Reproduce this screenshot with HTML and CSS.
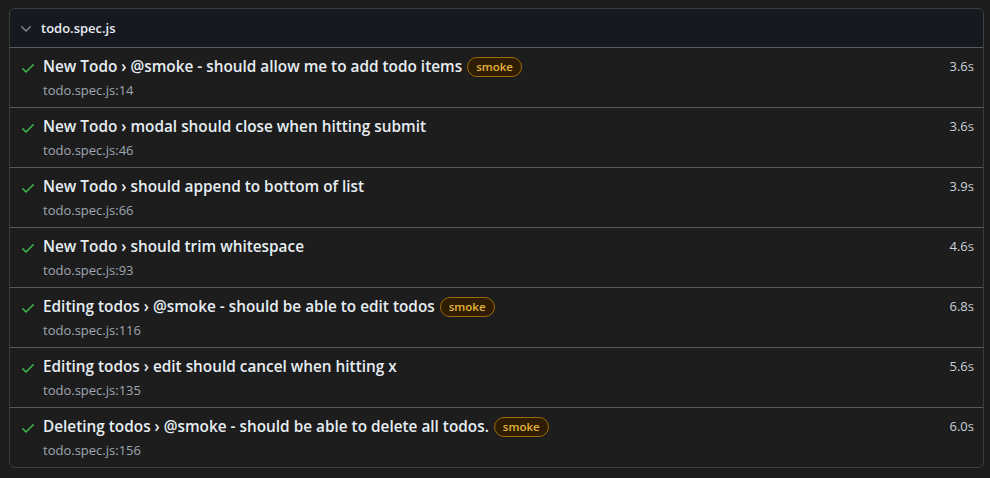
FILE: index.html
```html
<!DOCTYPE html>
<html lang="en">
<head>
<meta charset="utf-8">
<title>todo.spec.js</title>
<link rel="stylesheet" href="styles.css">
</head>
<body>
<div class="file">
  <div class="file-header">
    <svg class="chevron" viewBox="0 0 16 16" width="16" height="16"><path d="M12.78 5.22a.749.749 0 0 1 0 1.06l-4.25 4.25a.749.749 0 0 1-1.06 0L3.22 6.280a.749.749 0 1 1 1.06-1.06L8 8.939l3.72-3.719a.749.749 0 0 1 1.060 0Z"/></svg>
    <span class="file-name">todo.spec.js</span>
  </div>

  <div class="test">
    <svg class="check" viewBox="0 0 16 16" width="16" height="16"><path d="M13.78 4.22a.75.75 0 0 1 0 1.06l-7.25 7.25a.75.75 0 0 1-1.06 0L2.22 9.28a.751.751 0 0 1 .018-1.042.751.751 0 0 1 1.042-.018L6 10.94l6.72-6.72a.75.75 0 0 1 1.06 0Z"/></svg>
    <div class="test-main">
      <div class="title">New Todo › @smoke - should allow me to add todo items <span class="label">smoke</span></div>
      <div class="location">todo.spec.js:14</div>
    </div>
    <div class="duration">3.6s</div>
  </div>

  <div class="test">
    <svg class="check" viewBox="0 0 16 16" width="16" height="16"><path d="M13.78 4.22a.75.75 0 0 1 0 1.06l-7.25 7.25a.75.75 0 0 1-1.06 0L2.22 9.28a.751.751 0 0 1 .018-1.042.751.751 0 0 1 1.042-.018L6 10.94l6.72-6.72a.75.75 0 0 1 1.06 0Z"/></svg>
    <div class="test-main">
      <div class="title">New Todo › modal should close when hitting submit</div>
      <div class="location">todo.spec.js:46</div>
    </div>
    <div class="duration">3.6s</div>
  </div>

  <div class="test">
    <svg class="check" viewBox="0 0 16 16" width="16" height="16"><path d="M13.78 4.22a.75.75 0 0 1 0 1.06l-7.25 7.25a.75.75 0 0 1-1.06 0L2.22 9.28a.751.751 0 0 1 .018-1.042.751.751 0 0 1 1.042-.018L6 10.94l6.72-6.72a.75.75 0 0 1 1.06 0Z"/></svg>
    <div class="test-main">
      <div class="title">New Todo › should append to bottom of list</div>
      <div class="location">todo.spec.js:66</div>
    </div>
    <div class="duration">3.9s</div>
  </div>

  <div class="test">
    <svg class="check" viewBox="0 0 16 16" width="16" height="16"><path d="M13.78 4.22a.75.75 0 0 1 0 1.06l-7.25 7.25a.75.75 0 0 1-1.06 0L2.22 9.28a.751.751 0 0 1 .018-1.042.751.751 0 0 1 1.042-.018L6 10.94l6.72-6.72a.75.75 0 0 1 1.06 0Z"/></svg>
    <div class="test-main">
      <div class="title">New Todo › should trim whitespace</div>
      <div class="location">todo.spec.js:93</div>
    </div>
    <div class="duration">4.6s</div>
  </div>

  <div class="test">
    <svg class="check" viewBox="0 0 16 16" width="16" height="16"><path d="M13.78 4.22a.75.75 0 0 1 0 1.06l-7.25 7.25a.75.75 0 0 1-1.06 0L2.22 9.28a.751.751 0 0 1 .018-1.042.751.751 0 0 1 1.042-.018L6 10.94l6.72-6.72a.75.75 0 0 1 1.06 0Z"/></svg>
    <div class="test-main">
      <div class="title">Editing todos › @smoke - should be able to edit todos <span class="label">smoke</span></div>
      <div class="location">todo.spec.js:116</div>
    </div>
    <div class="duration">6.8s</div>
  </div>

  <div class="test">
    <svg class="check" viewBox="0 0 16 16" width="16" height="16"><path d="M13.78 4.22a.75.75 0 0 1 0 1.06l-7.25 7.25a.75.75 0 0 1-1.06 0L2.22 9.28a.751.751 0 0 1 .018-1.042.751.751 0 0 1 1.042-.018L6 10.94l6.72-6.72a.75.75 0 0 1 1.06 0Z"/></svg>
    <div class="test-main">
      <div class="title">Editing todos › edit should cancel when hitting x</div>
      <div class="location">todo.spec.js:135</div>
    </div>
    <div class="duration">5.6s</div>
  </div>

  <div class="test">
    <svg class="check" viewBox="0 0 16 16" width="16" height="16"><path d="M13.78 4.22a.75.75 0 0 1 0 1.06l-7.25 7.25a.75.75 0 0 1-1.06 0L2.22 9.28a.751.751 0 0 1 .018-1.042.751.751 0 0 1 1.042-.018L6 10.94l6.72-6.72a.75.75 0 0 1 1.06 0Z"/></svg>
    <div class="test-main">
      <div class="title">Deleting todos › @smoke - should be able to delete all todos. <span class="label">smoke</span></div>
      <div class="location">todo.spec.js:156</div>
    </div>
    <div class="duration">6.0s</div>
  </div>
</div>
</body>
</html>
```

FILE: styles.css
```css
html, body {
  margin: 0;
  background: #1d1d1d;
}
body {
  padding: 8px 6px 0 9px;
  font-family: "Segoe UI", "Open Sans", "Noto Sans", sans-serif;
  color: #e6edf3;
}
.file {
  border: 1px solid #3d3d3d;
  border-radius: 6px;
  overflow: hidden;
}
.file-header {
  display: flex;
  align-items: center;
  height: 38px;
  background: #161a20;
  border-bottom: 1px solid #5a5a5a;
  padding-left: 8px;
}
.chevron {
  fill: #7d8590;
  margin-right: 7px;
  margin-top: 1px;
}
.file-name {
  font-size: 13px;
  font-weight: 600;
  color: #e6edf3;
}
.test {
  display: flex;
  align-items: flex-start;
  height: 59px;
  padding: 0 9px 0 10px;
  border-bottom: 1px solid #5a5a5a;
}
.test:last-child {
  border-bottom: none;
}
.check {
  fill: #3fb950;
  margin-top: 12px;
  margin-right: 7px;
  flex: none;
}
.test-main {
  flex: 1;
  padding-top: 6px;
}
.title {
  font-size: 15.35px;
  font-weight: 600;
  line-height: 24px;
  color: #e6edf3;
}
.label {
  display: inline-block;
  font-size: 11.5px;
  font-weight: 600;
  line-height: 18px;
  padding: 0 8px;
  border: 1px solid #9e6a03;
  border-radius: 10px;
  background: #2e1d00;
  color: #e3b341;
  vertical-align: 1px;
  margin-left: 1px;
}
.location {
  font-size: 13px;
  line-height: 20px;
  color: #9ea7b3;
  margin-top: 2px;
}
.duration {
  font-size: 13px;
  line-height: 24px;
  padding-top: 6px;
  color: #c9d1d9;
}
```
